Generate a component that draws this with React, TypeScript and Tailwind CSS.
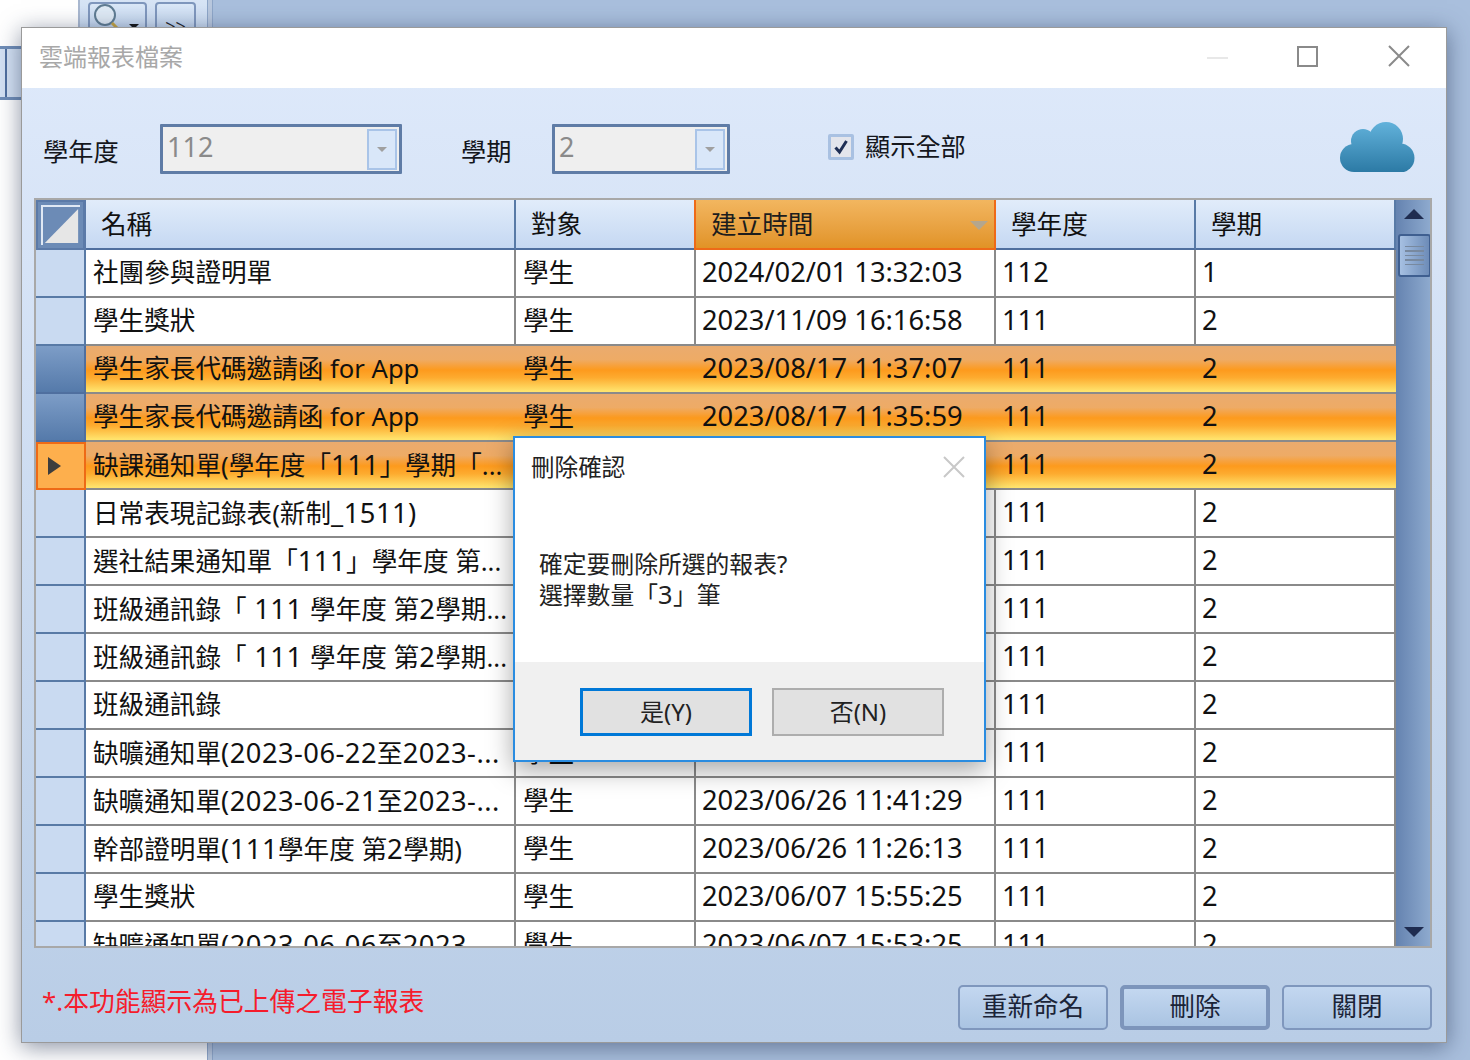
import type { ReactNode } from "react";

const FONT = "font-['Noto_Sans','Noto_Sans_CJK_TC',sans-serif]";

type RowKind = "normal" | "selected" | "current";

interface Row {
  name: string;
  target: string;
  created: string;
  year: string;
  term: string;
  kind?: RowKind;
}

const rows: Row[] = [
  { name: "社團參與證明單", target: "學生", created: "2024/02/01 13:32:03", year: "112", term: "1" },
  { name: "學生獎狀", target: "學生", created: "2023/11/09 16:16:58", year: "111", term: "2" },
  { name: "學生家長代碼邀請函 for App", target: "學生", created: "2023/08/17 11:37:07", year: "111", term: "2", kind: "selected" },
  { name: "學生家長代碼邀請函 for App", target: "學生", created: "2023/08/17 11:35:59", year: "111", term: "2", kind: "selected" },
  { name: "缺課通知單(學年度「111」學期「...", target: "學生", created: "2023/08/17 11:30:12", year: "111", term: "2", kind: "current" },
  { name: "日常表現記錄表(新制_1511)", target: "學生", created: "2023/08/10 10:12:40", year: "111", term: "2" },
  { name: "選社結果通知單「111」學年度 第...", target: "學生", created: "2023/07/21 09:45:11", year: "111", term: "2" },
  { name: "班級通訊錄「 111 學年度 第2學期...", target: "學生", created: "2023/07/12 14:20:33", year: "111", term: "2" },
  { name: "班級通訊錄「 111 學年度 第2學期...", target: "學生", created: "2023/07/12 14:18:02", year: "111", term: "2" },
  { name: "班級通訊錄", target: "學生", created: "2023/07/03 16:05:27", year: "111", term: "2" },
  { name: "缺曠通知單(2023-06-22至2023-...", target: "學生", created: "2023/06/26 11:44:18", year: "111", term: "2" },
  { name: "缺曠通知單(2023-06-21至2023-...", target: "學生", created: "2023/06/26 11:41:29", year: "111", term: "2" },
  { name: "幹部證明單(111學年度 第2學期)", target: "學生", created: "2023/06/26 11:26:13", year: "111", term: "2" },
  { name: "學生獎狀", target: "學生", created: "2023/06/07 15:55:25", year: "111", term: "2" },
  { name: "缺曠通知單(2023-06-06至2023-...", target: "學生", created: "2023/06/07 15:53:25", year: "111", term: "2" },
];

// digit runs are wider than the CJK around them in the original font
function Mixed({ text }: { text: string }) {
  const parts = text.split(/([\x20-\x7e]+)/);
  return (
    <span>
      {parts.map((p, i) =>
        i % 2 === 1 && /\d/.test(p) ? (
          <span key={i} className="text-[1.067em] tracking-[0.018em]">
            {p}
          </span>
        ) : (
          p
        ),
      )}
    </span>
  );
}

function Combo({ value, width }: { value: string; width: string }) {
  return (
    <div className={`${width} h-[50px] shrink-0 border-[3px] border-[#5f7ca6] bg-[#efefef] flex items-center justify-between pl-[4px] pr-[2px] rounded-[1px]`}>
      <span className="text-[27px] leading-none text-[#8a8a8a] -mt-[6px]">{value}</span>
      <div className="w-[30px] h-[41px] border-2 border-[#a9c4e8] bg-[#d9e7f9] flex items-center justify-center">
        <div className="w-0 h-0 border-x-[5px] border-x-transparent border-t-[5px] border-t-[#a0a0a0]" />
      </div>
    </div>
  );
}

function HeaderCell({ label, sorted }: { label?: string; sorted?: boolean }) {
  if (sorted) {
    return (
      <div className="relative flex items-center pl-[15px] pt-[3px] text-[25.6px] text-[#1d1d1d] bg-gradient-to-b from-[#f2b65f] to-[#e19325] border-x-2 border-b-2 border-x-[#ee6a18] border-b-[#ee6a18] -ml-[2px]">
        {label}
        <div className="absolute right-[6px] top-[21px] w-0 h-0 border-x-[9px] border-x-transparent border-t-[9px] border-t-[#b4a68e]" />
      </div>
    );
  }
  return (
    <div className="flex items-center pl-[15px] pt-[3px] text-[25.6px] text-[#111] bg-gradient-to-b from-[#e1ecfa] to-[#c5d8f2] border-r-2 border-b-2 border-r-[#587aa6] border-b-[#4f6f9f]">
      {label}
    </div>
  );
}

function RowHeader({ kind }: { kind: RowKind }) {
  if (kind === "current") {
    return (
      <div className="flex items-center justify-center bg-[#fdaf4d] border-2 border-[#ee6a16] pr-[14px]">
        <div className="w-0 h-0 border-y-[9px] border-y-transparent border-l-[13px] border-l-[#3d3d3d]" />
      </div>
    );
  }
  if (kind === "selected") {
    return <div className="bg-gradient-to-b from-[#7d9dc7] to-[#557aaa] border-r-2 border-b-2 border-[#4f6f9f]" />;
  }
  return <div className="bg-[#c9daf1] border-r-2 border-b-2 border-[#587aa6]" />;
}

function Cell({ children, kind }: { children: ReactNode; kind: RowKind }) {
  const base = "flex items-center pl-[7px] whitespace-nowrap overflow-hidden text-[25.6px] text-[#111]";
  if (kind === "normal") {
    return <div className={`${base} border-r-2 border-b-2 border-[#8a8a8a]`}>{children}</div>;
  }
  return <div className={`${base} border-b-2 border-[#8a8a8a]`}>{children}</div>;
}

function GridRow({ row }: { row: Row }) {
  const kind = row.kind ?? "normal";
  const bg =
    kind === "normal"
      ? "bg-white"
      : "bg-[linear-gradient(180deg,#eaab6e_0%,#eeab66_28%,#fd9a1d_50%,#fdab2f_66%,#ffe36c_94%)]";
  return (
    <div className="grid grid-cols-[50px_430px_180px_300px_200px_200px] h-[48px] shrink-0">
      <RowHeader kind={kind} />
      <div className={`col-span-5 grid grid-cols-[430px_180px_300px_200px_200px] ${bg}`}>
        <Cell kind={kind}>
          <Mixed text={row.name} />
        </Cell>
        <Cell kind={kind}>{row.target}</Cell>
        <Cell kind={kind}>
          <span className="text-[27.3px] -ml-[1px] -mt-[2px]">{row.created}</span>
        </Cell>
        <Cell kind={kind}>
          <span className="text-[27.3px] -ml-[1px] -mt-[2px]">{row.year}</span>
        </Cell>
        <Cell kind={kind}>
          <span className="text-[27.3px] -ml-[1px] -mt-[2px]">{row.term}</span>
        </Cell>
      </div>
    </div>
  );
}

function Scrollbar() {
  return (
    <div className="relative w-[35px] shrink-0 bg-gradient-to-r from-[#6583b0] to-[#8fabcf] flex flex-col items-center">
      <div className="mt-[9px] w-0 h-0 border-x-[10px] border-x-transparent border-b-[10px] border-b-[#1f2c50]" />
      <div className="mt-[15px] ml-[1px] w-[33px] h-[43px] rounded-[3px] border-2 border-[#3f5f90] bg-gradient-to-r from-[#a6c0e2] to-[#6d8cb8] flex flex-col items-center justify-center gap-[3px]">
        {[0, 1, 2, 3, 4].map((i) => (
          <div key={i} className="w-[19px] h-[1.5px] bg-[#78899f]" />
        ))}
      </div>
      <div className="mt-auto mb-[9px] w-0 h-0 border-x-[10px] border-x-transparent border-t-[10px] border-t-[#1f2c50]" />
    </div>
  );
}

function Cloud() {
  return (
    <svg width="75" height="50" viewBox="0 0 75 50" className="shrink-0">
      <defs>
        <linearGradient id="cloudFill" gradientUnits="userSpaceOnUse" x1="0" y1="0" x2="0" y2="50">
          <stop offset="0" stopColor="#62b2db" />
          <stop offset="1" stopColor="#2c7aa5" />
        </linearGradient>
      </defs>
      <g fill="url(#cloudFill)">
        <circle cx="14" cy="36" r="14" />
        <circle cx="23" cy="19" r="12" />
        <circle cx="46" cy="17" r="17" />
        <circle cx="60" cy="36" r="14.5" />
        <rect x="14" y="20" width="46" height="30" />
      </g>
    </svg>
  );
}

function FootButton({ label, active }: { label: string; active?: boolean }) {
  return (
    <button
      className={`w-[150px] h-[45px] rounded-[5px] text-[25.6px] text-[#1b2438] bg-gradient-to-b from-[#c3d7f0] to-[#aac4e2] flex items-center justify-center ${
        active ? "border-[4px] border-[#7d95bb]" : "border-2 border-[#7f97bd]"
      }`}
    >
      {label}
    </button>
  );
}

function ConfirmDialog() {
  return (
    <div className="absolute left-[491px] top-[408px] w-[473px] h-[326px] border-2 border-[#2a8ce0] bg-white shadow-[0_8px_24px_rgba(0,0,0,0.35)] flex flex-col">
      <div className="h-[224px] relative pl-[16px] text-[#222]">
        <div className="pt-[12px] text-[23.6px] leading-[34px]">刪除確認</div>
        <svg width="22" height="22" viewBox="0 0 22 22" className="absolute right-[19px] top-[18px]" stroke="#c8c8c8" strokeWidth="2">
          <path d="M1 1 21 21M21 1 1 21" />
        </svg>
        <div className="mt-[65px] ml-[8px] text-[23.8px] leading-[30px]">
          <div>
            <Mixed text="確定要刪除所選的報表?" />
          </div>
          <div>
            <Mixed text="選擇數量「3」筆" />
          </div>
        </div>
      </div>
      <div className="flex-1 bg-[#f0f0f0] flex gap-[20px] pl-[65px] pt-[26px]">
        <button className="w-[172px] h-[48px] border-[3px] border-[#0078d7] bg-[#e1e1e1] text-[24px] text-[#222]">
          <Mixed text="是(Y)" />
        </button>
        <button className="w-[172px] h-[48px] border-2 border-[#adadad] bg-[#e1e1e1] text-[24px] text-[#222]">
          <Mixed text="否(N)" />
        </button>
      </div>
    </div>
  );
}

function BackWindow() {
  return (
    <div className="flex h-full">
      <div className="w-[207px] bg-white flex flex-col">
        <div className="flex h-[46px]">
          <div className="w-[80px] bg-white border-r-2 border-[#a9b8d0]" />
          <div className="flex-1 bg-gradient-to-b from-[#d8e5f6] to-[#bfd3ec] flex gap-[8px] pl-[8px] pt-[2px]">
            <div className="relative w-[59px] h-[40px] rounded-[4px] border-2 border-[#7f97bd] bg-gradient-to-b from-[#dbe8f8] to-[#b5cbe7]">
              <svg width="30" height="30" viewBox="0 0 30 30" className="absolute left-[2px] top-0">
                <circle cx="13" cy="11" r="10" fill="#dfeaf5" stroke="#5f7c92" strokeWidth="2" />
                <path d="M20 19 26 25" stroke="#c9a63f" strokeWidth="3" />
              </svg>
              <div className="absolute right-[6px] top-[20px] w-0 h-0 border-x-[5px] border-x-transparent border-t-[5px] border-t-[#111]" />
            </div>
            <div className="w-[41px] h-[40px] rounded-[4px] border-2 border-[#7f97bd] bg-gradient-to-b from-[#dbe8f8] to-[#b5cbe7] text-center text-[18px] leading-[38px] text-[#222] pt-[3px]">
              &gt;&gt;
            </div>
          </div>
        </div>
        <div className="h-[54px] border-y-[3px] border-[#6f8db7] bg-[#d4e2f4] flex">
          <div className="w-[7px] border-r-2 border-[#4f6f9f]" />
        </div>
        <div className="flex-1 bg-white" />
      </div>
      <div className="w-[6px] bg-[#b9c8de] border-x border-[#8ea6c8]" />
      <div className="flex-1 bg-[#a9bfdd]" />
    </div>
  );
}

export default function App() {
  return (
    <div lang="zh-TW" className={`relative w-[1470px] h-[1060px] overflow-hidden bg-[#a9bfdd] ${FONT}`}>
      <BackWindow />

      <div className="absolute left-[21px] top-[27px] w-[1426px] h-[1016px] border border-[#9a9a9a] flex flex-col shadow-[0_4px_22px_rgba(40,55,85,0.55)] bg-gradient-to-b from-[#dfeafb] to-[#b9cde6]">
        {/* Title bar */}
        <div className="h-[60px] shrink-0 bg-white flex items-center pl-[17px] pr-[36px]">
          <span className="text-[24px] text-[#a8a8a8] -mt-[2px]">雲端報表檔案</span>
          <div className="ml-auto w-[21px] h-[2px] bg-[#e8e8e8]" />
          <div className="ml-[69px] w-[21px] h-[21px] border-2 border-[#8a8a8a] -mt-[4px]" />
          <svg width="22" height="22" viewBox="0 0 22 22" className="ml-[70px] -mt-[4px]" stroke="#8a8a8a" strokeWidth="2">
            <path d="M1 1 21 21M21 1 1 21" />
          </svg>
        </div>

        {/* Filter row */}
        <div className="h-[110px] shrink-0 flex items-center pl-[21px] pr-[31px] pt-[12px] text-[25.2px] text-[#14161c]">
          <div className="w-[117px] mt-[5px]">學年度</div>
          <Combo value="112" width="w-[242px]" />
          <div className="ml-[59px] w-[91px] mt-[5px]">學期</div>
          <Combo value="2" width="w-[178px]" />
          <div className="ml-[98px] w-[26px] h-[26px] border-[3px] border-[#a9c1e2] bg-[#e3e5ec] rounded-[2px] flex items-center justify-center -mt-[4px]">
            <svg width="16" height="16" viewBox="0 0 16 16" fill="none" stroke="#1f2f55" strokeWidth="3">
              <path d="M2.5 8.5 6.5 13 13.5 2" />
            </svg>
          </div>
          <span className="ml-[11px] -mt-[5px]">顯示全部</span>
          <div className="ml-auto -mt-[4px]">
            <Cloud />
          </div>
        </div>

        {/* Data grid */}
        <div className="ml-[12px] w-[1398px] h-[750px] shrink-0 border-2 border-[#a8a8a8] flex overflow-hidden bg-white">
          <div className="w-[1360px] shrink-0 flex flex-col">
            <div className="grid grid-cols-[50px_430px_180px_300px_200px_200px] h-[50px] shrink-0">
              <div className="border-2 border-[#5b7aa8] bg-[#6c8bb6] p-[3px] border-r-[3px]">
                <svg width="100%" height="100%" viewBox="0 0 40 40" preserveAspectRatio="none" className="border-t-2 border-l-2 border-[#dfe8f4]">
                  <path d="M38 2V38H2Z" fill="#e6e6e6" />
                </svg>
              </div>
              <HeaderCell label="名稱" />
              <HeaderCell label="對象" />
              <HeaderCell label="建立時間" sorted />
              <HeaderCell label="學年度" />
              <HeaderCell label="學期" />
            </div>
            {rows.map((r, i) => (
              <GridRow key={i} row={r} />
            ))}
          </div>
          <Scrollbar />
        </div>

        {/* Footer */}
        <div className="flex-1 flex items-end justify-between pl-[20px] pr-[14px] pb-[12px]">
          <div className="text-[25.8px] text-[#f51c2c] mb-[9px]">
            <Mixed text="*.本功能顯示為已上傳之電子報表" />
          </div>
          <div className="flex gap-[12px]">
            <FootButton label="重新命名" />
            <FootButton label="刪除" active />
            <FootButton label="關閉" />
          </div>
        </div>

        <ConfirmDialog />
      </div>
    </div>
  );
}
